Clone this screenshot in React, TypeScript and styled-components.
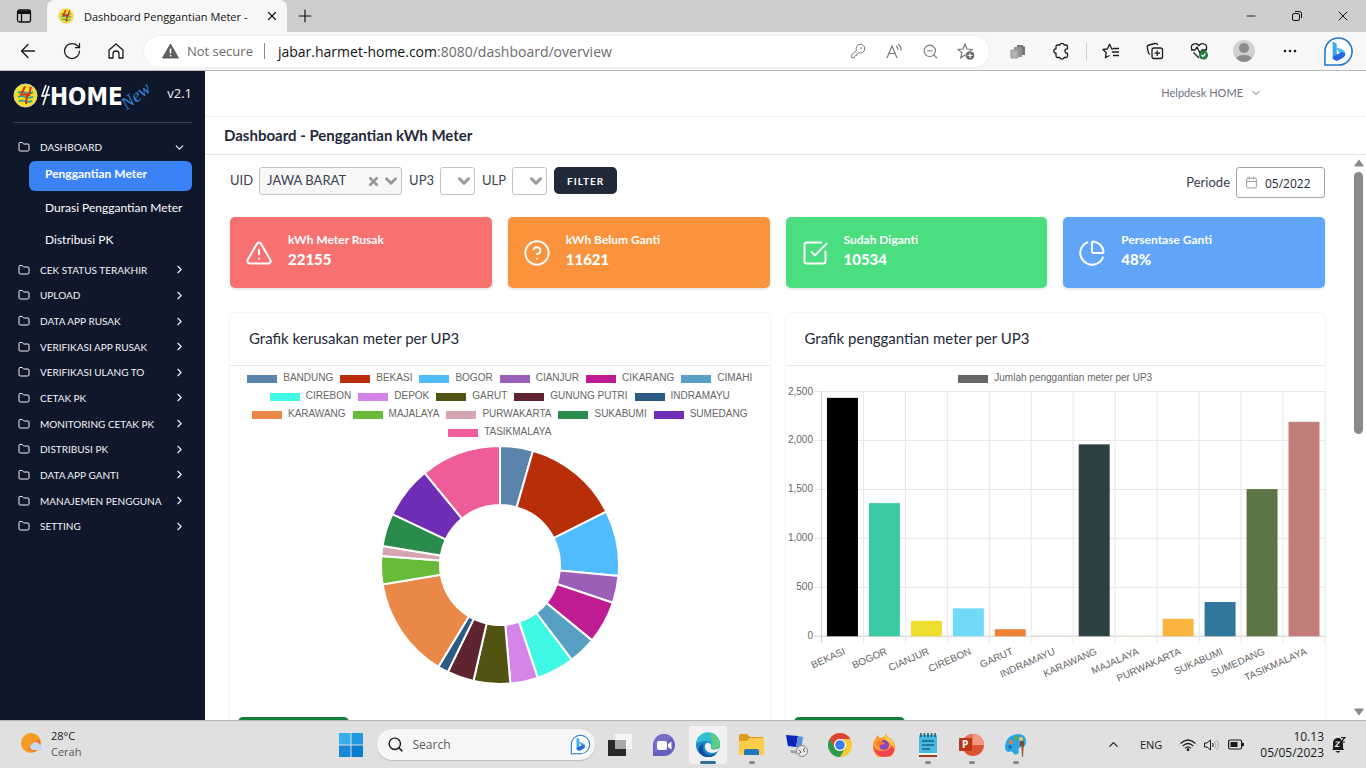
import React from 'react';
import styled, { createGlobalStyle } from 'styled-components';
import {
  ArrowLeft, Calendar, ChevronDown, ChevronRight, ChevronUp, CircleHelp, Folder,
  KeyRound, Minus, PieChart, Plus, RotateCw, Search, SquareCheckBig, TriangleAlert, X, ZoomOut,
} from 'lucide-react';

const ui = '"Open Sans", "Noto Sans", sans-serif';
const app = 'Lato, "Open Sans", sans-serif';
const chart = '"Liberation Sans", Arial, sans-serif';

const Global = createGlobalStyle`
  * { box-sizing: border-box; }
  body { margin: 0; font-family: ${app}; color: #1f2937; background: #fff; }
  button, input, select { font: inherit; color: inherit; }
  button { border: 0; padding: 0; background: none; cursor: pointer; }
  ul { list-style: none; margin: 0; padding: 0; }
  a { color: inherit; text-decoration: none; }
  svg { display: block; }
`;

const Screen = styled.div`
  display: grid;
  grid-template-rows: 32px 39px minmax(0, 1fr) 48px;
  height: 100vh;
`;

/* ---------- browser window ---------- */

const TabBar = styled.div`
  display: flex;
  background: #cdcdcd;
  font-family: ${ui};
  color: #111;
`;
const TabMenu = styled.button`
  display: grid;
  place-items: center;
  width: 47px;
`;
const Tab = styled.div`
  display: flex;
  align-items: center;
  gap: 10px;
  width: 240px;
  padding: 0 8px 0 11px;
  border-radius: 7px 7px 0 0;
  background: #f7f7f7;
  font-size: 11px;
`;
const TabTitle = styled.span`
  flex: 1;
  white-space: nowrap;
`;
const NewTab = styled.button`
  display: grid;
  place-items: center;
  width: 36px;
`;
const WindowButtons = styled.div`
  display: flex;
  margin-left: auto;
`;
const WindowButton = styled.button`
  display: grid;
  place-items: center;
  width: 46px;
`;
const Toolbar = styled.div`
  display: flex;
  align-items: center;
  padding-left: 6px;
  padding-right: 3px;
  border-bottom: 1px solid #bababa;
  background: #f7f7f7;
  font-family: ${ui};
`;
const ToolButton = styled.button<{ $width?: number }>`
  display: grid;
  place-items: center;
  width: ${(p) => p.$width ?? 44}px;
  height: 32px;
  color: #1b1b1b;
`;
const Address = styled.div`
  display: flex;
  flex: 1;
  align-items: center;
  height: 31px;
  margin: 0 7px 0 6px;
  padding-left: 18px;
  padding-right: 5px;
  border-radius: 16px;
  background: #fff;
  box-shadow: 0 0 2px #e2e2e2;
  color: #6b6b6b;
  font-size: 13px;
`;
const Security = styled.span`
  margin-left: 8px;
  padding-right: 11px;
  border-right: 1px solid #8a8a8a;
  line-height: 16px;
`;
const Url = styled.span`
  flex: 1;
  padding-left: 13px;
  font-size: 14px;
  b { color: #111; font-weight: 400; }
`;
const AddressButton = styled.button`
  display: grid;
  place-items: center;
  width: 36px;
  height: 28px;
  color: #777;
`;
const Rule = styled.span`
  width: 1px;
  height: 17px;
  margin: 0 2px;
  background: #cfcfcf;
`;

/* ---------- web application ---------- */

const Page = styled.div`
  display: grid;
  grid-template-columns: 205px minmax(0, 1fr);
  overflow: hidden;
`;
const Sidebar = styled.aside`
  padding: 0 13px;
  background: #0f172a;
  color: #f1f5f9;
`;
const Brand = styled.div`
  display: flex;
  height: 52px;
  border-bottom: 1px solid #334155;
  padding-top: 12px;
`;
const BrandName = styled.span`
  font: bold 24px/28px "DejaVu Sans Condensed", "DejaVu Sans", sans-serif;
  color: #fff;
`;
const BrandTag = styled.span`
  margin-left: 2px;
  font: italic 18px/22px "Liberation Serif", serif;
  color: #2f86dc;
  transform: rotate(-38deg);
`;
const Version = styled.span`
  margin-left: auto;
  font: 13px/20px ${ui};
`;
const Group = styled.button`
  display: flex;
  align-items: center;
  width: 100%;
  height: 24px;
  padding: 0 6px 0 5px;
  font-size: 10px;
  text-align: left;
  span { flex: 1; margin-left: 10px; }
`;
const FirstGroup = styled.div`
  padding-top: 12px;
`;
const SubMenu = styled.ul`
  padding: 2px 0 0 16px;
`;
const SubLink = styled.a<{ $active?: boolean }>`
  display: block;
  height: 30px;
  margin-bottom: 2px;
  padding-left: 16px;
  border-radius: 6px;
  font-size: 12px;
  line-height: ${(p) => (p.$active ? 26 : 29)}px;
  font-weight: ${(p) => (p.$active ? 700 : 400)};
  background: ${(p) => (p.$active ? '#3b82f6' : 'transparent')};
  color: #fff;
`;
const Groups = styled.ul`
  display: grid;
  grid-auto-rows: 1fr;
  align-items: center;
  height: 282px;
`;
const Content = styled.main`
  display: flex;
  flex-direction: column;
  min-height: 0;
  overflow: hidden;
`;
const UserBar = styled.header`
  display: flex;
  justify-content: flex-end;
  align-items: center;
  height: 46px;
  padding-right: 104px;
  border-bottom: 1px solid #efefef;
`;
const UserButton = styled.button`
  display: flex;
  align-items: center;
  gap: 7px;
  padding-bottom: 2px;
  font-size: 11px;
  color: #6b7280;
`;
const Title = styled.h1`
  height: 38px;
  margin: 0;
  padding-left: 19px;
  border-bottom: 1px solid #e3e3e3;
  font-size: 15px;
  line-height: 36px;
  font-weight: 700;
`;
const Scroller = styled.div`
  display: flex;
  flex: 1;
  min-height: 0;
`;
const Body = styled.div`
  flex: 1;
  min-width: 0;
  padding: 12px 26px 0 25px;
  overflow: hidden;
`;
const ScrollTrack = styled.div`
  display: flex;
  flex-direction: column;
  align-items: center;
  width: 15px;
  padding: 4px 0;
  color: #8a8a8a;
`;
const Thumb = styled.div`
  width: 9px;
  height: 47%;
  margin: 5px 0 auto;
  border-radius: 5px;
  background: #8a8a8a;
`;
const Filters = styled.form`
  display: flex;
  align-items: flex-start;
  height: 50px;
  font-size: 13px;
  color: #374151;
`;
const Label = styled.label`
  margin-right: 6px;
  line-height: 26px;
`;
const Picker = styled.span<{ $wide?: boolean }>`
  position: relative;
  width: ${(p) => (p.$wide ? 143 : 35)}px;
  margin-right: 7px;
  color: #999;
  select {
    width: 100%;
    height: 28px;
    padding: 0 0 2px 7px;
    border: 1px solid #c3c3c3;
    border-radius: 3px;
    appearance: none;
    background: ${(p) => (p.$wide ? '#f7f7f7' : '#fff')};
    color: #374151;
  }
`;
const PickerMark = styled.span`
  position: absolute;
  top: 5px;
  right: 2px;
  pointer-events: none;
`;
const ClearButton = styled.button`
  position: absolute;
  top: 8px;
  right: 22px;
  color: #999;
`;
const FilterButton = styled.button`
  width: 63px;
  height: 27px;
  border-radius: 5px;
  background: #1f2937;
  color: #fff;
  font-size: 10px;
  font-weight: 700;
  letter-spacing: 1px;
`;
const Period = styled.div`
  display: flex;
  margin-left: auto;
  label { margin-right: 6px; line-height: 30px; }
`;
const PeriodField = styled.span`
  position: relative;
  color: #999;
  svg { position: absolute; left: 9px; top: 9px; }
  input {
    width: 89px;
    height: 31px;
    padding: 2px 0 0 28px;
    border: 1px solid #a3a3a3;
    border-radius: 3px;
    font: 12px ${ui};
    color: #1f2937;
  }
`;
const Stats = styled.section`
  display: grid;
  grid-template-columns: repeat(4, 1fr);
  gap: 16px;
`;
const Stat = styled.article<{ $color: string }>`
  display: flex;
  align-items: center;
  gap: 15px;
  height: 71px;
  padding: 0 15px;
  border-radius: 5px;
  background: ${(p) => p.$color};
  color: #fff;
  box-shadow: 0 1px 3px rgba(0, 0, 0, 0.14);
`;
const StatText = styled.div`
  padding-bottom: 5px;
  font-size: 12px;
  line-height: 18px;
  font-weight: 700;
  strong { display: block; font-size: 15px; line-height: 20px; }
`;
const Charts = styled.section`
  display: grid;
  grid-template-columns: 1fr 1fr;
  gap: 16px;
  padding-top: 25px;
`;
const Card = styled.article`
  border-radius: 5px;
  box-shadow: 0 0 2px rgba(0, 0, 0, 0.12);
`;
const CardTitle = styled.h2`
  height: 53px;
  margin: 0;
  padding-left: 19px;
  border-bottom: 1px solid #e5e7eb;
  font-size: 15px;
  line-height: 50px;
  font-weight: 400;
`;
const Legend = styled.ul`
  display: flex;
  flex-wrap: wrap;
  justify-content: center;
  column-gap: 7px;
  padding: 3px 8px 0;
  font: 10px/18px ${chart};
  color: #666;
`;
const LegendItem = styled.li<{ $color: string }>`
  display: flex;
  align-items: center;
  gap: 6px;
  height: 18px;
  &::before {
    content: '';
    width: 30px;
    height: 8px;
    margin-top: 2px;
    background: ${(p) => p.$color};
  }
`;
const DonutBox = styled.div`
  display: flex;
  justify-content: center;
  padding: 5px 0 33px;
`;
const BarSvg = styled.svg`
  width: 100%;
  height: auto;
  overflow: visible;
  font: 10px ${chart};
  fill: #666;
`;
const BarBox = styled.div`
  padding-bottom: 17px;
`;
const Export = styled.button`
  display: block;
  width: 111px;
  height: 32px;
  margin: 0 8px 8px;
  border-radius: 5px;
  background: #15803d;
`;

/* ---------- taskbar ---------- */

const Taskbar = styled.footer`
  display: grid;
  grid-template-columns: 1fr auto 1fr;
  align-items: center;
  border-top: 1px solid #b5b5b5;
  background: #e0e0e0;
  font: 11px/16px ${ui};
  color: #1b1b1b;
`;
const Weather = styled.div`
  display: flex;
  align-items: center;
  gap: 8px;
  padding: 0 0 2px 20px;
  span { display: block; color: #555; }
`;
const Apps = styled.div`
  display: flex;
  align-items: center;
`;
const AppButton = styled.button<{ $active?: boolean; $open?: boolean }>`
  display: grid;
  position: relative;
  place-items: center;
  width: 38px;
  height: 38px;
  margin: 0 3px;
  border-radius: 4px;
  background: ${(p) => (p.$active ? '#f1f1f1' : 'transparent')};
  &::after {
    content: '';
    position: absolute;
    bottom: 0;
    width: ${(p) => (p.$active ? 16 : 6)}px;
    height: 3px;
    border-radius: 2px;
    background: ${(p) => (p.$active ? '#2f7299' : p.$open ? '#858585' : 'transparent')};
  }
`;
const SearchBox = styled.label`
  display: flex;
  align-items: center;
  width: 218px;
  height: 31px;
  margin: 0 3px 0 4px;
  padding: 0 4px 0 10px;
  border-radius: 16px;
  background: #f6f6f6;
  box-shadow: 0 1px 1px #bbb;
  input {
    flex: 1;
    min-width: 0;
    margin-left: 9px;
    padding: 0;
    border: 0;
    background: none;
    font-size: 12px;
  }
  input::placeholder { color: #5c5c5c; opacity: 1; }
`;
const Tray = styled.div`
  display: flex;
  align-items: center;
  justify-content: flex-end;
  padding-right: 20px;
  font-size: 12px;
`;
const TrayButton = styled.button`
  display: grid;
  place-items: center;
  width: 24px;
  height: 32px;
`;
const Language = styled.button`
  margin: 0 14px;
  font-size: 11px;
`;
const Clock = styled.div`
  margin: 0 7px 0 12px;
  text-align: right;
`;

/* ---------- drawings ---------- */

const PlnLogo = ({ size }: { size: number }) => (
  <svg width={size} height={size} viewBox="0 0 26 26" fill="none">
    <circle cx="13" cy="13" r="12" fill="#f4df25" stroke="#d8d4b0" />
    <path d="M5 10q4-1.500 8 0t8-.5M5 14.500q4-1.500 8 0t8-.5M6 19q4-1.500 7 0t7-.5" stroke="#2aa38a" strokeWidth="1.800" />
    <path d="M12.500 3.500L8.500 12h8.500L18.500 4M17 12l-2.500 1.500L13.500 22" stroke="#d3331d" strokeWidth="2.200" />
  </svg>
);

const TabPanel = () => (
  <svg width="16" height="16" viewBox="0 0 16 16" fill="none" stroke="currentColor" strokeWidth="1.300">
    <rect x="1.500" y="2" width="13" height="12" rx="2" />
    <path d="M2 3.500h12M2 5h12" strokeWidth="2" />
    <path d="M5.500 5v9" />
  </svg>
);

const Bing = ({ size }: { size: number }) => (
  <svg width={size} height={size} viewBox="0 0 32 32" fill="none">
    <path d="M2 30V16A14 14 0 1 1 16 30z" fill="#fbfdff" stroke="#2277c9" strokeWidth="1.600" />
    <path d="M10 6.500q0-.8.8-.4l2.600 1.300q.8.400.8 1.300V20L10 23z" fill="#3aa9ee" />
    <path d="M10 21.500l4.200-2.500 4-1.800-1.600-.8q-.6-.4-.9-1l-1-2.200q-.3-.9.700-.6l3.600 1.400q4 1.600 4 4.600 0 2.200-2 3.500l-5.200 3.200q-1.600.8-3.200-.2L10.600 24q-.8-.6-.6-2.500z" fill="#2468dc" />
    <path d="M14.700 13.200q-.3-.9.700-.6l3.600 1.400q4 1.600 4 4.600-2.200-2.400-6.400-2.200-.6-.4-.9-1z" fill="#43c2ee" />
  </svg>
);

const HomeIcon = () => (
  <svg width="18" height="18" viewBox="0 0 18 18" fill="none" stroke="currentColor" strokeWidth="1.300" strokeLinejoin="round">
    <path d="M2 8l7-6 7 6v8h-4v-4a3 3 0 0 0-6 0v4H2z" />
  </svg>
);

const RestoreIcon = () => (
  <svg width="12" height="12" viewBox="0 0 12 12" fill="none" stroke="currentColor">
    <rect x="1.500" y="3.500" width="7" height="7" rx="1.500" />
    <path d="M4 1.500h4.500a2 2 0 0 1 2 2V8" />
  </svg>
);

const WarningIcon = () => (
  <svg width="17" height="16" viewBox="0 0 17 16">
    <path d="M8.500 1L16.500 15H.5z" fill="#5f5f5f" stroke="#5f5f5f" strokeLinejoin="round" />
    <path d="M8.500 5.500v5M8.500 12v1.500" stroke="#fff" strokeWidth="1.500" />
  </svg>
);

const ReadAloud = () => (
  <svg width="17" height="16" viewBox="0 0 17 16" fill="none" stroke="currentColor" strokeWidth="1.200">
    <path d="M1 15L6 3l5 12M3 10.500h6.200M10 3q2 1.500 2 4M12 1q3.500 2.500 3 6.500" />
  </svg>
);

const StarPlus = () => (
  <svg width="18" height="17" viewBox="0 0 18 17" fill="none" stroke="currentColor">
    <path d="M8 1l2 5 5 .4-4 3.400 1.300 5L8 12l-4.300 2.800 1.300-5-4-3.400L6 6z" strokeWidth="1.200" />
    <circle cx="13" cy="12.500" r="4.500" fill="#666" stroke="#fff" strokeWidth=".5" />
    <path d="M10.500 12.500h5M13 10v5" stroke="#fff" strokeWidth="1.200" />
  </svg>
);

const PuzzleIcon = () => (
  <svg width="18" height="18" viewBox="0 0 18 18" fill="none" stroke="currentColor" strokeWidth="1.300" strokeLinejoin="round">
    <path d="M4.500 3h2.300a2.300 2.300 0 0 1 4.400 0H13q1.500 0 1.500 1.500v2.300h-.4a2.200 2.200 0 0 0 0 4.400h.4v2.800q0 1.500-1.500 1.500h-1.800a2.300 2.300 0 0 1-4.400 0H4.500Q3 15.500 3 14v-2.800a2.200 2.200 0 0 1 0-4.400V4.500Q3 3 4.500 3z" />
  </svg>
);

const StarList = () => (
  <svg width="18" height="17" viewBox="0 0 18 17" fill="none" stroke="currentColor" strokeWidth="1.300" strokeLinejoin="round">
    <path d="M11 6.200L9.800 6 7.500 1.200 5.300 6 1 6.500l3.200 3.200-.8 5L7.500 12.500M11 5.500h6M10 9h7M11 12.500h6" />
  </svg>
);

const Pages = () => (
  <svg width="16" height="16" viewBox="0 0 16 16">
    <path d="M7 2h5l3 2v8H7z" fill="#777" />
    <path d="M4 4h6l2 1v9H4z" fill="#919191" />
    <path d="M1 7h7v8H1z" fill="#b4b4b4" stroke="#999" />
  </svg>
);

const Collections = () => (
  <svg width="18" height="18" viewBox="0 0 18 18" fill="none" stroke="currentColor" strokeWidth="1.300">
    <rect x="6" y="6" width="10.500" height="10.500" rx="2" />
    <path d="M11.200 8.500v5.500M8.500 11.200H14M4 12.500Q2.500 12 2.200 10L1.300 5.500Q1 3.500 3 3l6-1.500q2-.4 3 1.500" />
  </svg>
);

const Essentials = () => (
  <svg width="19" height="18" viewBox="0 0 19 18" fill="none" stroke="currentColor" strokeWidth="1.300">
    <path d="M2 8Q0 3 4 2q3-1 5 1.500Q11 1 14 2q4 1.500 2 6M1 8h4l2-3 3 6 2-3h5M3.500 10.500L9 16" />
    <circle cx="13.500" cy="13" r="4.500" fill="#188038" stroke="none" />
    <path d="M11.500 13l1.500 1.500 2.500-3" stroke="#fff" />
  </svg>
);

const Avatar = () => (
  <svg width="22" height="22" viewBox="0 0 22 22">
    <circle cx="11" cy="11" r="11" fill="#cfcfcf" />
    <circle cx="11" cy="8" r="5" fill="#8b8b8b" />
    <path d="M3.500 18q1.500-3 7.500-3t7.500 3q-3 4-7.500 4t-7.500-4z" fill="#8b8b8b" />
  </svg>
);

const Dots = () => (
  <svg width="14" height="4" viewBox="0 0 14 4" fill="currentColor">
    <circle cx="2" cy="2" r="1.300" /><circle cx="7" cy="2" r="1.300" /><circle cx="12" cy="2" r="1.300" />
  </svg>
);

const BrandBolt = () => (
  <svg width="12" height="24" viewBox="0 0 12 24" fill="none" stroke="#fff">
    <path d="M8 2L4 13h4L5 22M11 3L8 12h4" strokeWidth="1.600" />
  </svg>
);

const Triangle = ({ down }: { down?: boolean }) => (
  <svg width="10" height="8" viewBox="0 0 10 8" fill="currentColor">
    <path d={down ? 'M1 0.500h8q1 0 .5 1L5.500 7q-.5.800-1 0L.5 1.500Q0 .5 1 .5z' : 'M1 7.500h8q1 0 .5-1L5.500 1q-.5-.8-1 0L.5 6.500q-.5 1 .5 1z'} />
  </svg>
);

const Sun = () => (
  <svg width="23" height="24" viewBox="0 0 23 24">
    <circle cx="11" cy="11" r="10" fill="#f49b25" />
    <path d="M8 17q6-9 12-9 2 8-6 12z" fill="#ea7527" />
    <path d="M11 17a3 3 0 0 1 1-5 4.500 4.500 0 0 1 8 1q3 0 3 3 0 2-3 2h-7q-2 0-2-1z" fill="#c5d9ef" />
  </svg>
);

const WindowsLogo = () => (
  <svg width="24" height="24" viewBox="0 0 24 24">
    <path d="M0 0h11.500v11.500H0z" fill="#35b0ec" />
    <path d="M12.500 0H24v11.500H12.500z" fill="#2199e2" />
    <path d="M0 12.500h11.500V24H0z" fill="#1789d8" />
    <path d="M12.500 12.500H24V24H12.500z" fill="#0d7bd0" />
  </svg>
);

const TaskView = () => (
  <svg width="24" height="24" viewBox="0 0 24 24">
    <path d="M7 1h17v15H7z" fill="#f5f5f5" />
    <path d="M0 7h18v16H0z" fill="#292929" />
    <path d="M7 7h11v9H7z" fill="#a9a9a9" />
  </svg>
);

const Chat = () => (
  <svg width="24" height="24" viewBox="0 0 24 24">
    <path d="M1 23V12A11 11 0 1 1 12 23z" fill="#6461be" />
    <path d="M5 4a11 11 0 0 1 15 1L3 20 2 9z" fill="#8274cc" opacity=".7" />
    <rect x="5" y="8" width="10" height="9" rx="2" fill="#fff" />
    <path d="M16 11l3.500-2.500v8L16 14z" fill="#fff" />
  </svg>
);

const Edge = () => (
  <svg width="26" height="26" viewBox="0 0 26 26">
    <circle cx="13" cy="13" r="12" fill="#1687cf" />
    <path d="M1 12A12 12 0 0 1 25 12.500Q24.500 17 19 17q-4 0-3-3 .6-5-5-5-6 0-10 3z" fill="#32bfd4" />
    <path d="M15 1.200A12 12 0 0 1 25 12.500Q24.500 17 19 17q-4 0-3-2.500 3-2 1.500-5.500Q16 5 15 1.200z" fill="#5fce78" />
    <path d="M8.500 11.500Q6 19 12 22.500q6 2.500 11-3-3 5.500-10 5.500-6 0-9-5-2-6 4.500-8.500z" fill="#12509b" />
    <path d="M12 10.500q-3.500 3-1.500 7 3 4.500 9.500 3 4-1 4.600-4.500L25.500 20 23 19.500q-1 1.500-2.500 2L26 22v-8q-2 3.500-7 3.500-4.500-.3-3-3.500.5-3-4-3.500z" fill="#f1f1f1" />
  </svg>
);

const Files = () => (
  <svg width="25" height="23" viewBox="0 0 25 23">
    <path d="M0 3q0-2 2-2h6l3 3h12q2 0 2 2v5H0z" fill="#dd9c20" />
    <path d="M0 8h8l3-3h14v15q0 2-2 2H2q-2 0-2-2z" fill="#fbcb4a" />
    <path d="M5 22v-4q0-2 2-2h11q2 0 2 2v4z" fill="#2277bb" />
  </svg>
);

const Remote = () => (
  <svg width="24" height="24" viewBox="0 0 24 24">
    <path d="M1 1l19 2-2 14L3 15z" fill="#d7dce3" />
    <path d="M2 2l12 1-2 11-8-1z" fill="#0d22b8" />
    <path d="M14 3l5 1-2 12-5-2z" fill="#5b8ed8" />
    <path d="M6 17l8 1 3 3-10-1z" fill="#9aa3ad" />
    <circle cx="18" cy="18" r="5.500" fill="#e6e6e6" stroke="#888" />
    <path d="M15 17l2 2-2 2M21 15l-2 2 2 2" fill="none" stroke="#555" />
  </svg>
);

const Chrome = () => (
  <svg width="24" height="24" viewBox="0 0 24 24">
    <circle cx="12" cy="12" r="12" fill="#fbc934" />
    <path d="M1.600 6A12 12 0 0 1 22.400 6H12A6 6 0 0 0 6.800 15z" fill="#dd4537" />
    <path d="M1.600 6A12 12 0 0 0 12 24l5.200-9A6 6 0 0 1 6.800 15z" fill="#2b9a4b" />
    <circle cx="12" cy="12" r="6" fill="#fff" />
    <circle cx="12" cy="12" r="4.800" fill="#3b7ded" />
  </svg>
);

const Firefox = () => (
  <svg width="24" height="24" viewBox="0 0 24 24">
    <path d="M4 5l1-3 3 3 4-1 2-4q2 5 5 6 5 4 4 9A11 11 0 0 1 1 14Q1 8 4 5z" fill="#ff9a2b" />
    <path d="M1 12q2 6 9 6 8 0 11-7 5 12-9 13Q2 23 1 12z" fill="#f34454" />
    <path d="M14 1q2 5 5 6 4 4 3 9-2-7-9-9z" fill="#ffd548" />
    <circle cx="12" cy="12" r="5" fill="#8a45c7" />
    <path d="M5 8q5-1 8 3-5 0-6 3-3-2-2-6z" fill="#ff7a30" />
  </svg>
);

const Notepad = () => (
  <svg width="20" height="24" viewBox="0 0 20 24">
    <rect x="1" y="2" width="18" height="19" rx="1" fill="#4ab9df" />
    <path d="M3 0v4M6.500 0v4M10 0v4M13.500 0v4M17 0v4" stroke="#1b5476" strokeWidth="1.500" />
    <path d="M4 8h12M4 12h12M4 16h8" stroke="#17648d" strokeWidth="1.600" />
    <path d="M1 20h18v2H1z" fill="#f4f4f4" /><path d="M1 22h18v2H1z" fill="#9b3b20" />
  </svg>
);

const PptLetter = styled.text`
  font: bold 10px ${ui};
  fill: #fff;
`;
const PowerPoint = () => (
  <svg width="25" height="24" viewBox="0 0 25 24">
    <circle cx="14" cy="12" r="11" fill="#dc5336" />
    <path d="M14 1a11 11 0 0 1 11 11H14z" fill="#f49a83" />
    <path d="M3 12A11 11 0 0 1 14 1v11z" fill="#e9735a" />
    <rect y="5" width="13" height="13" rx="1" fill="#b93517" />
    <PptLetter x="3" y="15">P</PptLetter>
  </svg>
);

const Paint = () => (
  <svg width="24" height="24" viewBox="0 0 24 24">
    <path d="M1 13Q2 2 14 1q8 0 8 8 0 5-5 5-4 1-2 5-2 4-5 2-2-4-5-2-4 0-4-6z" fill="#2aa5e0" />
    <circle cx="7" cy="9" r="2" fill="#ee7c2b" /><circle cx="12" cy="5" r="2" fill="#60ac41" />
    <circle cx="17" cy="6" r="2" fill="#f2c744" /><circle cx="6" cy="14" r="1.800" fill="#1e66b4" />
    <path d="M17 9h3l-1 15h-1z" fill="#a85a35" /><path d="M16 8h4v5h-4z" fill="#7c4a34" />
  </svg>
);

const WifiIcon = () => (
  <svg width="16" height="12" viewBox="0 0 16 12" fill="none" stroke="currentColor" strokeWidth="1.200">
    <path d="M.5 4.500q7.500-7 15 0M2.800 7q5.200-5 10.400 0M5 9.300q3-3 6 0" />
    <circle cx="8" cy="10.700" r=".8" fill="currentColor" />
  </svg>
);

const VolumeIcon = () => (
  <svg width="16" height="12" viewBox="0 0 16 12" fill="none" stroke="currentColor">
    <path d="M.5 4h2.500L6.500 1v10L3 8H.5zM8.500 4q1.500 2 0 4" strokeLinejoin="round" />
    <path d="M10.500 2.500q3 3.500 0 7M12.500 1q4 5 0 10" stroke="#aaa" />
  </svg>
);

const BatteryIcon = () => (
  <svg width="16" height="11" viewBox="0 0 16 11">
    <rect x=".6" y="1" width="13" height="9" rx="1.500" fill="none" stroke="currentColor" strokeWidth="1.200" />
    <path d="M2.500 3h7v5h-7zM14 4h2v3h-2z" fill="currentColor" />
  </svg>
);

const BellIcon = () => (
  <svg width="15" height="17" viewBox="0 0 15 17" fill="none">
    <path d="M2 13V7q0-4 4-5h3l3 5v5l1 2H1zM4.500 15h5l-2.500 2z" fill="#1b1b1b" />
    <path d="M4.500 6h4l-4 4.500h4" stroke="#e0e0e0" strokeWidth="1.200" />
    <path d="M10 1.500h4L10 6h4" stroke="#1b1b1b" strokeWidth="1.200" />
  </svg>
);

/* ---------- data ---------- */

const groups = [
  'CEK STATUS TERAKHIR', 'UPLOAD', 'DATA APP RUSAK', 'VERIFIKASI APP RUSAK', 'VERIFIKASI ULANG TO', 'CETAK PK',
  'MONITORING CETAK PK', 'DISTRIBUSI PK', 'DATA APP GANTI', 'MANAJEMEN PENGGUNA', 'SETTING',
];

/* name, colour, angle in degrees at which the slice ends */
const slices: [string, string, number][] = [
  ['BANDUNG', '#5b84ad', 16.1], ['BEKASI', '#b82e08', 63.4], ['BOGOR', '#50bcff', 95.3], ['CIANJUR', '#9b5fb8', 108.5],
  ['CIKARANG', '#bf1c94', 129.3], ['CIMAHI', '#579fc3', 142.9], ['CIREBON', '#3ff8e6', 161.5], ['DEPOK', '#d585ea', 175],
  ['GARUT', '#505311', 192.9], ['GUNUNG PUTRI', '#5e2430', 206], ['INDRAMAYU', '#2b5a84', 211.2],
  ['KARAWANG', '#ea8947', 260.6], ['MAJALAYA', '#68bb38', 274.3], ['PURWAKARTA', '#d5a6b1', 279.2],
  ['SUKABUMI', '#298b4c', 295.3], ['SUMEDANG', '#702eb7', 320.7], ['TASIKMALAYA', '#ee5c99', 360],
];

const bars: [string, string, number][] = [
  ['BEKASI', '#000', 2435], ['BOGOR', '#3bcba4', 1360], ['CIANJUR', '#eede30', 158], ['CIREBON', '#70dbf8', 285],
  ['GARUT', '#ee8136', 72], ['INDRAMAYU', '#ddd', 4], ['KARAWANG', '#2d4145', 1960], ['MAJALAYA', '#eee8b0', 3],
  ['PURWAKARTA', '#f9b440', 178], ['SUKABUMI', '#32779c', 350], ['SUMEDANG', '#5d7446', 1503], ['TASIKMALAYA', '#c27d7b', 2190],
];

const point = (deg: number, r: number) => {
  const a = (deg * Math.PI) / 180;
  return `${119 + r * Math.sin(a)} ${119 - r * Math.cos(a)}`;
};

const Donut = () => (
  <svg width="238" height="238" viewBox="0 0 238 238" role="img" aria-label="Grafik kerusakan meter per UP3">
    {slices.map(([name, color, end], i) => {
      const start = i ? slices[i - 1][2] : 0;
      return (
        <path
          key={name}
          fill={color}
          stroke="#fff"
          strokeWidth="2"
          d={`M${point(start, 119)}A119 119 0 0 1 ${point(end, 119)}L${point(end, 60)}A60 60 0 0 0 ${point(start, 60)}z`}
        />
      );
    })}
  </svg>
);

const BarChart = () => (
  <BarSvg viewBox="0 0 540 313" role="img" aria-label="Grafik penggantian meter per UP3">
    {[0, 1, 2, 3, 4, 5].map((n) => (
      <g key={n}>
        <path d={`M28 ${249.5 - n * 49}H540`} stroke={n ? '#e6e6e6' : '#cfcfcf'} />
        <text x="27" y={252.5 - n * 49} textAnchor="end">{(n * 500).toLocaleString('en-US')}</text>
      </g>
    ))}
    {Array.from({ length: 13 }, (_, i) => (
      <path key={i} d={`M${35.5 + i * 42} 4V256`} stroke={i ? '#e6e6e6' : '#cfcfcf'} />
    ))}
    {bars.map(([name, color, value], i) => (
      <g key={name}>
        <rect x={41 + i * 42} y={249.5 - value * 0.098} width="31" height={value * 0.098} fill={color} />
        <text textAnchor="end" transform={`translate(${60 + i * 42} 267) rotate(-24)`}>{name}</text>
      </g>
    ))}
  </BarSvg>
);

const stats = [
  { label: 'kWh Meter Rusak', value: '22155', color: '#f87171', Icon: TriangleAlert },
  { label: 'kWh Belum Ganti', value: '11621', color: '#fb923c', Icon: CircleHelp },
  { label: 'Sudah Diganti', value: '10534', color: '#4ade80', Icon: SquareCheckBig },
  { label: 'Persentase Ganti', value: '48%', color: '#60a5fa', Icon: PieChart },
];

const pinned = [
  { name: 'Task view', Icon: TaskView }, { name: 'Chat', Icon: Chat }, { name: 'Edge', Icon: Edge, active: true },
  { name: 'Files', Icon: Files, open: true }, { name: 'Remote desktop', Icon: Remote }, { name: 'Chrome', Icon: Chrome },
  { name: 'Firefox', Icon: Firefox }, { name: 'Notepad', Icon: Notepad, open: true },
  { name: 'PowerPoint', Icon: PowerPoint, open: true }, { name: 'Paint', Icon: Paint, open: true },
];

const Browser = () => (
  <>
    <TabBar>
      <TabMenu aria-label="Tab actions"><TabPanel /></TabMenu>
      <Tab>
        <PlnLogo size={16} />
        <TabTitle>Dashboard Penggantian Meter -</TabTitle>
        <button aria-label="Close tab"><X size={14} strokeWidth={2} /></button>
      </Tab>
      <NewTab aria-label="New tab"><Plus size={20} strokeWidth={1.4} /></NewTab>
      <WindowButtons>
        <WindowButton aria-label="Minimize"><Minus size={14} strokeWidth={1.5} /></WindowButton>
        <WindowButton aria-label="Restore"><RestoreIcon /></WindowButton>
        <WindowButton aria-label="Close"><X size={16} strokeWidth={1.5} /></WindowButton>
      </WindowButtons>
    </TabBar>
    <Toolbar>
      <ToolButton aria-label="Back"><ArrowLeft size={22} strokeWidth={1.5} /></ToolButton>
      <ToolButton aria-label="Refresh"><RotateCw size={20} strokeWidth={1.5} /></ToolButton>
      <ToolButton aria-label="Home"><HomeIcon /></ToolButton>
      <Address>
        <WarningIcon />
        <Security>Not secure</Security>
        <Url><b>jabar.harmet-home.com</b>:8080/dashboard/overview</Url>
        <AddressButton aria-label="Passwords"><KeyRound size={16} strokeWidth={1.5} /></AddressButton>
        <AddressButton aria-label="Read aloud"><ReadAloud /></AddressButton>
        <AddressButton aria-label="Zoom out"><ZoomOut size={17} strokeWidth={1.5} /></AddressButton>
        <AddressButton aria-label="Add to favorites"><StarPlus /></AddressButton>
      </Address>
      <ToolButton aria-label="Pages"><Pages /></ToolButton>
      <ToolButton aria-label="Extensions"><PuzzleIcon /></ToolButton>
      <Rule />
      <ToolButton aria-label="Favorites"><StarList /></ToolButton>
      <ToolButton aria-label="Collections"><Collections /></ToolButton>
      <ToolButton aria-label="Browser essentials"><Essentials /></ToolButton>
      <ToolButton aria-label="Profile" $width={46}><Avatar /></ToolButton>
      <ToolButton aria-label="Settings" $width={46}><Dots /></ToolButton>
      <ToolButton aria-label="Bing" $width={50}><Bing size={31} /></ToolButton>
    </Toolbar>
  </>
);

const Navigation = () => (
  <Sidebar>
    <Brand>
      <PlnLogo size={25} />
      <BrandBolt />
      <BrandName>HOME</BrandName>
      <BrandTag>New</BrandTag>
      <Version>v2.1</Version>
    </Brand>
    <nav>
      <FirstGroup>
        <Group><Folder size={12} /><span>DASHBOARD</span><ChevronDown size={13} /></Group>
      </FirstGroup>
      <SubMenu>
        <li><SubLink href="#meter" $active>Penggantian Meter</SubLink></li>
        <li><SubLink href="#durasi">Durasi Penggantian Meter</SubLink></li>
        <li><SubLink href="#distribusi">Distribusi PK</SubLink></li>
      </SubMenu>
      <Groups>
        {groups.map((name) => (
          <li key={name}><Group><Folder size={12} /><span>{name}</span><ChevronRight size={13} /></Group></li>
        ))}
      </Groups>
    </nav>
  </Sidebar>
);

const Dashboard = () => (
  <Content>
    <UserBar>
      <UserButton>Helpdesk HOME <ChevronDown size={12} /></UserButton>
    </UserBar>
    <Title>Dashboard - Penggantian kWh Meter</Title>
    <Scroller>
      <Body>
        <Filters onSubmit={(e) => e.preventDefault()}>
          <Label htmlFor="uid">UID</Label>
          <Picker $wide>
            <select id="uid"><option>JAWA BARAT</option></select>
            <ClearButton type="button" aria-label="Clear"><X size={13} strokeWidth={5} /></ClearButton>
            <PickerMark><ChevronDown size={18} strokeWidth={4} /></PickerMark>
          </Picker>
          <Label htmlFor="up3">UP3</Label>
          <Picker><select id="up3" /><PickerMark><ChevronDown size={18} strokeWidth={4} /></PickerMark></Picker>
          <Label htmlFor="ulp">ULP</Label>
          <Picker><select id="ulp" /><PickerMark><ChevronDown size={18} strokeWidth={4} /></PickerMark></Picker>
          <FilterButton>FILTER</FilterButton>
          <Period>
            <label htmlFor="periode">Periode</label>
            <PeriodField><input id="periode" defaultValue="05/2022" /><Calendar size={13} strokeWidth={1.8} /></PeriodField>
          </Period>
        </Filters>
        <Stats>
          {stats.map(({ label, value, color, Icon }) => (
            <Stat key={label} $color={color}>
              <Icon size={28} strokeWidth={1.7} />
              <StatText>{label}<strong>{value}</strong></StatText>
            </Stat>
          ))}
        </Stats>
        <Charts>
          <Card>
            <CardTitle>Grafik kerusakan meter per UP3</CardTitle>
            <Legend>{slices.map(([name, color]) => <LegendItem key={name} $color={color}>{name}</LegendItem>)}</Legend>
            <DonutBox><Donut /></DonutBox>
            <Export aria-label="Export kerusakan" />
          </Card>
          <Card>
            <CardTitle>Grafik penggantian meter per UP3</CardTitle>
            <Legend><LegendItem $color="#666">Jumlah penggantian meter per UP3</LegendItem></Legend>
            <BarBox><BarChart /></BarBox>
            <Export aria-label="Export penggantian" />
          </Card>
        </Charts>
      </Body>
      <ScrollTrack><Triangle /><Thumb /><Triangle down /></ScrollTrack>
    </Scroller>
  </Content>
);

const Desktop = () => (
  <Taskbar>
    <Weather><Sun /><div>28°C<span>Cerah</span></div></Weather>
    <Apps>
      <AppButton aria-label="Start"><WindowsLogo /></AppButton>
      <SearchBox><Search size={17} /><input placeholder="Search" aria-label="Search" /><Bing size={21} /></SearchBox>
      {pinned.map(({ name, Icon, active, open }) => (
        <AppButton key={name} aria-label={name} $active={active} $open={open}><Icon /></AppButton>
      ))}
    </Apps>
    <Tray>
      <TrayButton aria-label="Hidden icons"><ChevronUp size={15} /></TrayButton>
      <Language>ENG</Language>
      <TrayButton aria-label="Network"><WifiIcon /></TrayButton>
      <TrayButton aria-label="Volume"><VolumeIcon /></TrayButton>
      <TrayButton aria-label="Battery"><BatteryIcon /></TrayButton>
      <Clock>10.13<br />05/05/2023</Clock>
      <BellIcon />
    </Tray>
  </Taskbar>
);

export default function App() {
  return (
    <>
      <Global />
      <Screen>
        <Browser />
        <Page>
          <Navigation />
          <Dashboard />
        </Page>
        <Desktop />
      </Screen>
    </>
  );
}
